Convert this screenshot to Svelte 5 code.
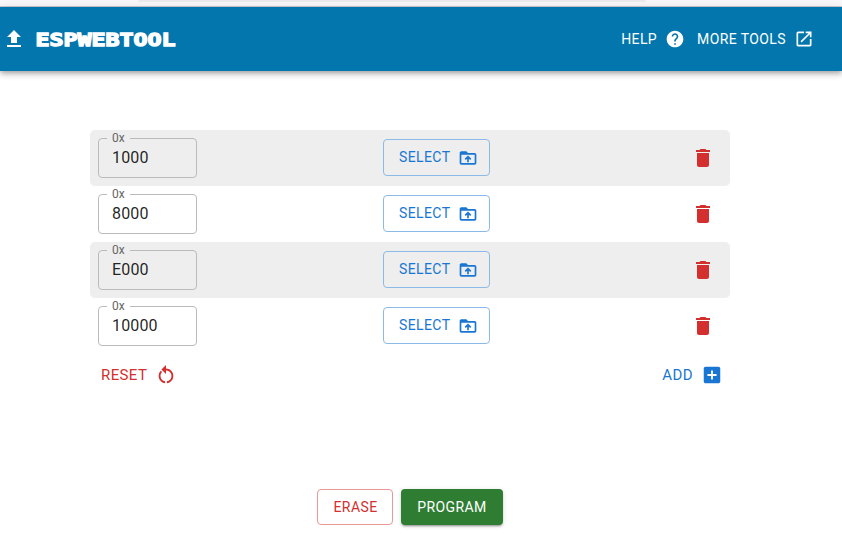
<script>
  const rows = $state(['1000', '8000', 'E000', '10000']);
</script>

{#snippet icon(d, size = 20)}
  <svg class="icon" width={size} height={size} viewBox="0 0 24 24" fill="currentColor" aria-hidden="true"><path {d} /></svg>
{/snippet}

<div class="page">
  <div class="strip"><div class="tab"></div></div>
  <header>
    {@render icon('M5 20h14v-2H5v2zm0-10h4v6h6v-6h4l-7-7-7 7z', 24)}
    <svg class="logo" width="142" height="24" viewBox="0 0 142 24">
      <text x="0.5" y="19.3" textLength="140" lengthAdjust="spacingAndGlyphs">ESPWEBTOOL</text>
    </svg>
    <nav>
      <button class="link">HELP {@render icon('M12 2C6.48 2 2 6.48 2 12s4.48 10 10 10 10-4.48 10-10S17.52 2 12 2zm1 17h-2v-2h2v2zm2.07-7.75-.9.92C13.45 12.9 13 13.5 13 15h-2v-.5c0-1.1.45-2.1 1.17-2.83l1.24-1.26c.37-.36.59-.86.59-1.41 0-1.1-.9-2-2-2s-2 .9-2 2H8c0-2.21 1.79-4 4-4s4 1.79 4 4c0 .88-.36 1.68-.93 2.25z')}</button>
      <button class="link">MORE TOOLS {@render icon('M19 19H5V5h7V3H5c-1.11 0-2 .9-2 2v14c0 1.1.89 2 2 2h14c1.1 0 2-.9 2-2v-7h-2v7zM14 3v2h3.59l-9.83 9.83 1.41 1.41L19 6.41V10h2V3h-7z')}</button>
    </nav>
  </header>

  <main>
    {#each rows as value}
      <div class="row">
        <fieldset>
          <legend>0x</legend>
          <span>{value}</span>
        </fieldset>
        <button class="outlined select">SELECT {@render icon('M20 6h-8l-2-2H4c-1.1 0-1.99.9-1.99 2L2 18c0 1.1.9 2 2 2h16c1.1 0 2-.9 2-2V8c0-1.1-.9-2-2-2zm0 12H4V8h16v10zM8 13.01l1.41 1.41L11 12.84V17h2v-4.16l1.59 1.59L16 13.01 12.01 9 8 13.01z')}</button>
        <button class="delete" aria-label="Delete">{@render icon('M6 19c0 1.1.9 2 2 2h8c1.1 0 2-.9 2-2V7H6v12zM19 4h-3.5l-1-1h-5l-1 1H5v2h14V4z', 24)}</button>
      </div>
    {/each}
    <div class="actions">
      <button class="text reset">RESET {@render icon('M12 5V1L7 6l5 5V7c3.31 0 6 2.69 6 6 0 2.97-2.17 5.43-5 5.91v2.02c3.95-.49 7-3.85 7-7.93 0-4.42-3.58-8-8-8zM6 13c0-1.65.67-3.15 1.76-4.24L6.34 7.34C4.9 8.79 4 10.79 4 13c0 4.08 3.05 7.44 7 7.93v-2.02c-2.83-.48-5-2.94-5-5.91z', 22)}</button>
      <button class="text add">ADD {@render icon('M19 3H5c-1.11 0-2 .9-2 2v14c0 1.1.89 2 2 2h14c1.1 0 2-.9 2-2V5c0-1.1-.9-2-2-2zm-2 10h-4v4h-2v-4H7v-2h4V7h2v4h4v2z', 22)}</button>
    </div>
  </main>

  <footer>
    <button class="outlined erase">ERASE</button>
    <button class="program">PROGRAM</button>
  </footer>
</div>

<style>
  :global(body) { margin: 0; background: #fff; }
  .page {
    width: 842px; height: 551px; overflow: hidden;
    display: flex; flex-direction: column;
    font-family: Roboto, sans-serif; color: rgba(0, 0, 0, 0.87);
  }
  .strip { height: 6px; flex: none; background: #f9f9fb; border-bottom: 1px solid #ccccce; }
  .tab { width: 508px; height: 2px; margin-left: 138px; background: #ececee; border-radius: 0 0 3px 3px; }
  header {
    height: 64px; flex: none; box-sizing: border-box; padding: 0 28px 0 2px;
    display: flex; align-items: center;
    background: #0276ad; color: #fff;
    box-shadow: 0 2px 4px -1px rgba(0,0,0,.2), 0 4px 5px rgba(0,0,0,.14), 0 1px 10px rgba(0,0,0,.12);
  }
  .icon { display: block; flex: none; }
  .logo { display: block; margin-left: 9px; }
  .logo text {
    font-family: "DejaVu Sans Mono", monospace; font-size: 18.5px; font-weight: 700;
    fill: #fff; stroke: #fff; stroke-width: 1.35px; stroke-linejoin: miter;
  }
  nav { margin-left: auto; display: flex; gap: 12px; }
  button {
    display: flex; align-items: center; justify-content: center;
    box-sizing: border-box; margin: 0; padding: 0; border: 0; background: none; color: inherit;
    font: 400 14px/24.5px Roboto, sans-serif; letter-spacing: 0.4px; white-space: nowrap;
  }
  .link { gap: 8px; }
  main { width: 640px; margin: 59px 0 0 90px; }
  .row {
    height: 56px; box-sizing: border-box; padding: 0 15px 0 8px; border-radius: 5px;
    display: grid; grid-template-columns: 285px 1fr 24px; align-items: center;
  }
  .row:nth-child(odd) { background: #eee; }
  fieldset {
    width: 99px; height: 46px; margin: -6px 0 0; padding: 0 0 0 5px; box-sizing: border-box;
    border: 1px solid #bbb; border-radius: 4px; min-width: 0;
  }
  legend { margin-left: 3px; padding: 0 5px; font-size: 12px; line-height: 12px; letter-spacing: .1px; color: #666; }
  fieldset span { display: block; margin-left: 8px; font-size: 16px; line-height: 23px; letter-spacing: .15px; padding-top: 2px; }
  .outlined { border: 1px solid; border-radius: 4px; }
  .select { width: 107px; height: 37px; margin-bottom: 2px; gap: 8px; padding: 0 0 0 15px; color: #1976d2; border-color: #8cbae8; justify-content: flex-start; }
  .select :global(.icon) { margin-top: 2px; }
  .delete { color: #d32f2f; }
  .actions { height: 42px; padding: 0 7px 0 11px; display: flex; justify-content: space-between; align-items: center; }
  .text { font-size: 15px; gap: 8px; }
  .reset { color: #d32f2f; }
  .add { color: #1976d2; }
  footer { width: 640px; margin: 93px 0 0 90px; display: flex; justify-content: center; gap: 8px; }
  .erase { width: 76px; height: 36px; padding-left: 1px; color: #d32f2f; border-color: #e99797; }
  .program {
    width: 102px; height: 36px; border-radius: 4px; background: #2e7d32; color: #fff;
    box-shadow: 0 3px 1px -2px rgba(0,0,0,.2), 0 2px 2px rgba(0,0,0,.14), 0 1px 5px rgba(0,0,0,.12);
  }
</style>
